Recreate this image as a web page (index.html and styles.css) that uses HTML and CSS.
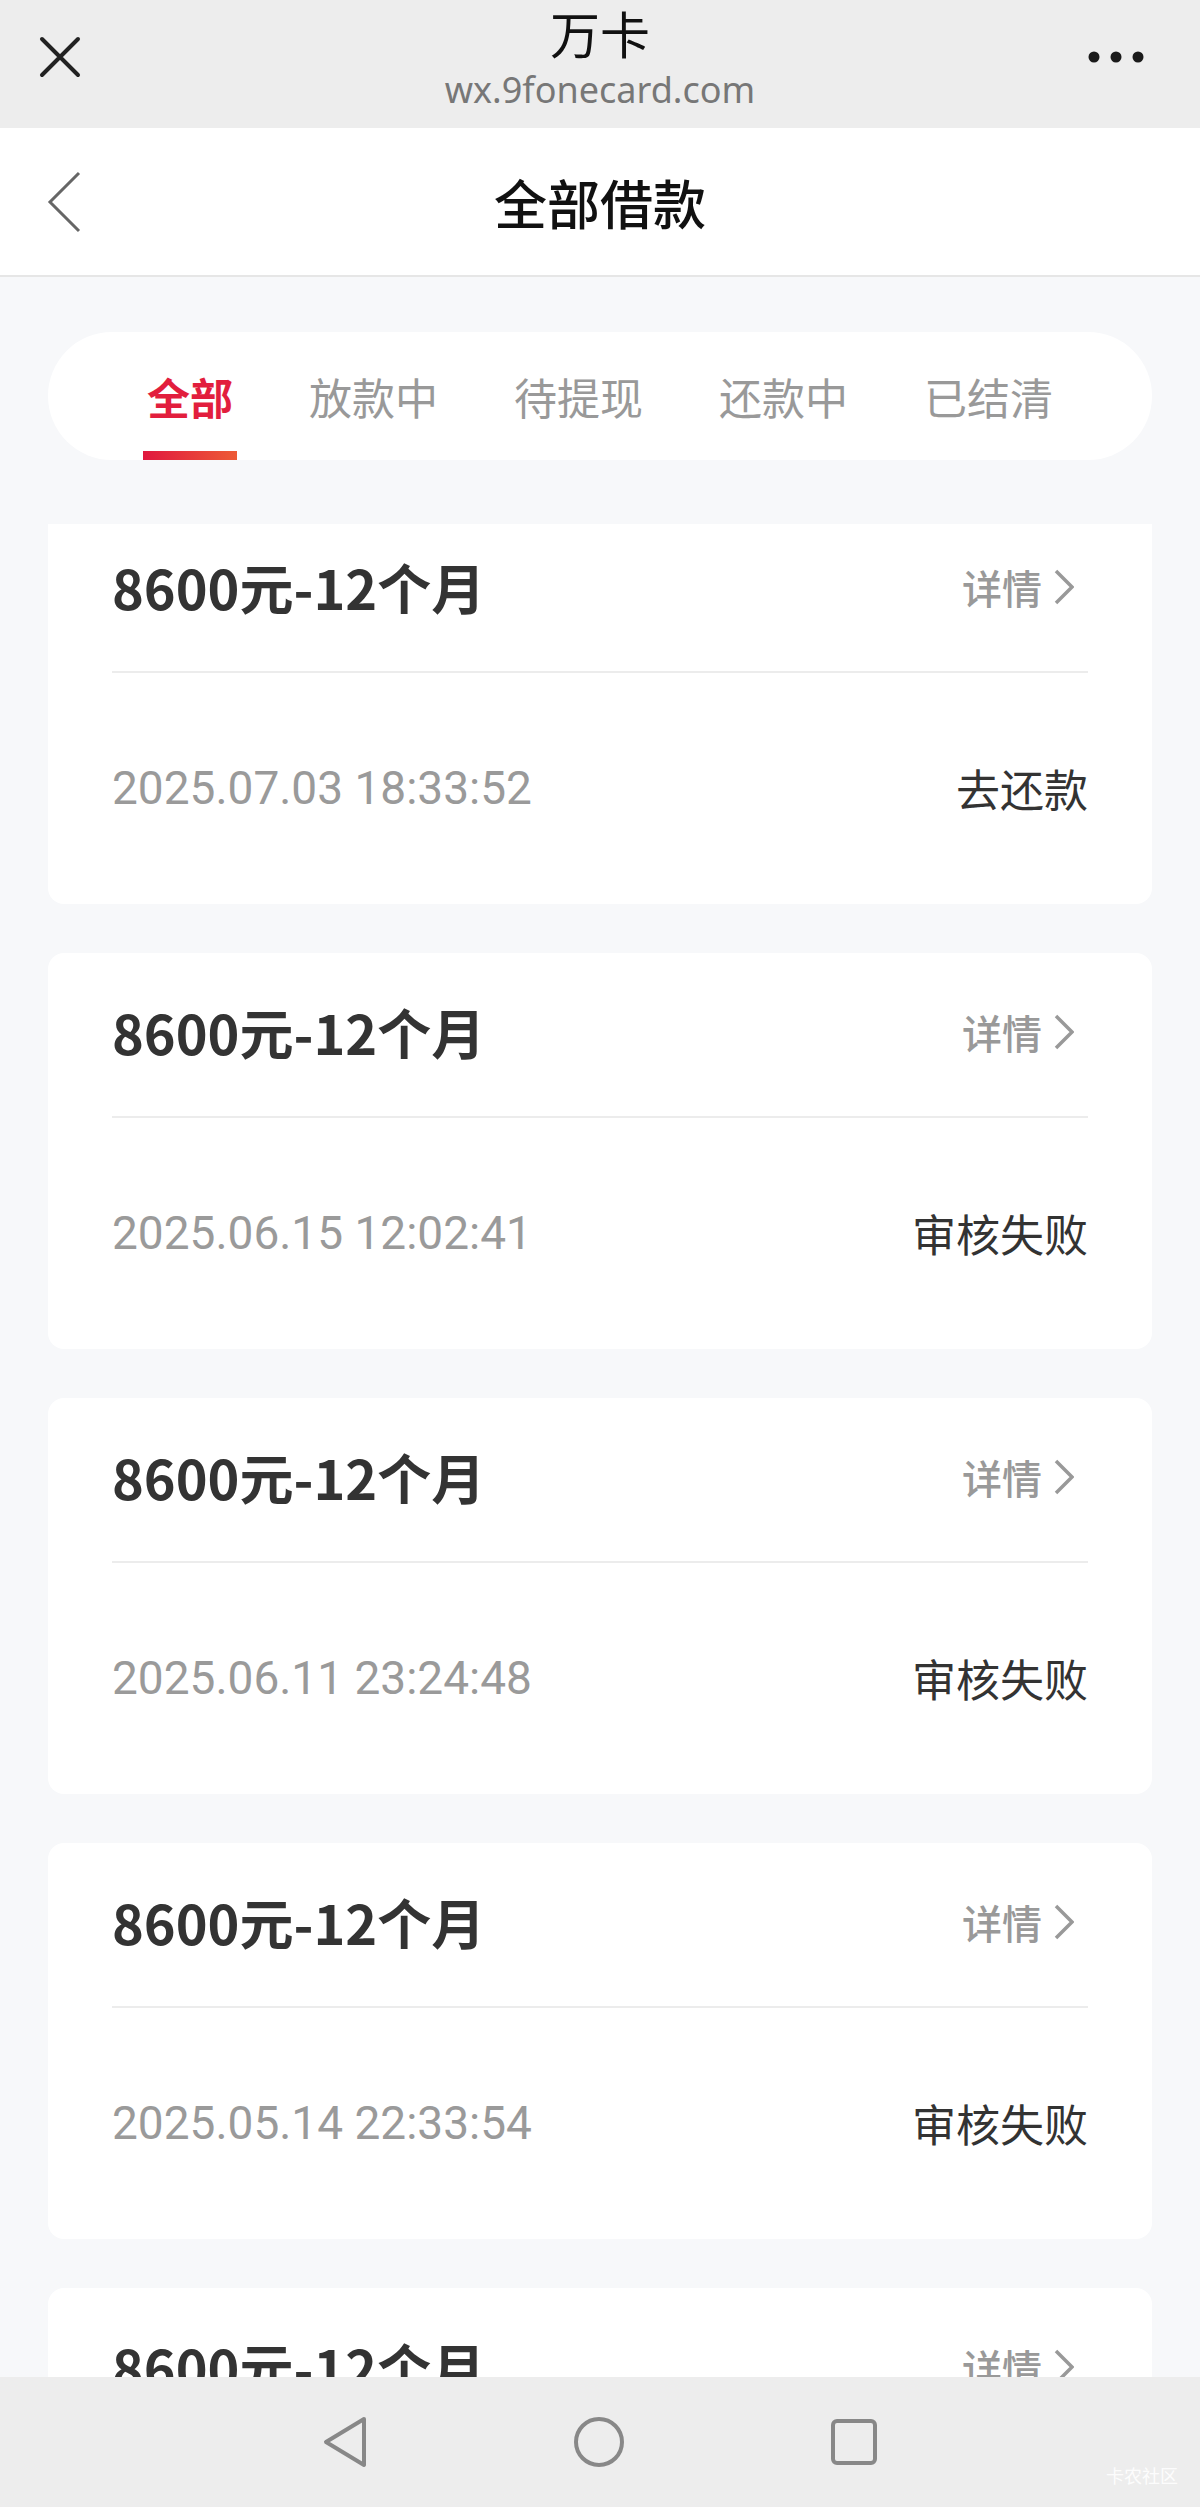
FILE: index.html
```html
<!DOCTYPE html>
<html lang="zh-CN">
<head>
  <meta charset="UTF-8">
  <meta name="viewport" content="width=device-width, initial-scale=1.0">
  <title>全部借款</title>
  <link rel="stylesheet" href="styles.css">
</head>
<body>
  <!-- Barra del browser -->
  <div class="topbar">
    <div class="topbar-left">
      <svg class="icon-close" width="42" height="42" viewBox="0 0 42 42">
        <path d="M3 3 L39 39 M39 3 L3 39" stroke="#222" stroke-width="4" stroke-linecap="round" fill="none"/>
      </svg>
    </div>
    <div class="topbar-title">
      <div class="site-name">万卡</div>
      <div class="site-url">wx.9fonecard.com</div>
    </div>
    <div class="topbar-right">
      <svg class="icon-more" width="56" height="12" viewBox="0 0 56 12">
        <circle cx="6" cy="6" r="5.5" fill="#1a1a1a"/>
        <circle cx="28" cy="6" r="5.5" fill="#1a1a1a"/>
        <circle cx="50" cy="6" r="5.5" fill="#1a1a1a"/>
      </svg>
    </div>
  </div>

  <!-- Intestazione pagina -->
  <div class="header">
    <div class="header-left">
      <svg class="icon-back" width="34" height="62" viewBox="0 0 34 62">
        <path d="M32 2 L3 31 L32 60" stroke="#666" stroke-width="3" fill="none"/>
      </svg>
    </div>
    <h1 class="page-title">全部借款</h1>
    <div class="header-right"></div>
  </div>

  <div class="main">
    <div class="tabs">
      <span class="tab active">全部</span>
      <span class="tab">放款中</span>
      <span class="tab">待提现</span>
      <span class="tab">还款中</span>
      <span class="tab">已结清</span>
    </div>

    <div class="list">
      <div class="card">
        <div class="card-head">
          <span class="loan-title">8600元-12个月</span>
          <span class="detail">详情
            <svg width="20" height="36" viewBox="0 0 20 36"><path d="M2 2 L18 18 L2 34" stroke="#999" stroke-width="3.5" fill="none"/></svg>
          </span>
        </div>
        <div class="card-body">
          <span class="loan-date">2025.07.03 18:33:52</span>
          <span class="loan-status">去还款</span>
        </div>
      </div>

      <div class="card">
        <div class="card-head">
          <span class="loan-title">8600元-12个月</span>
          <span class="detail">详情
            <svg width="20" height="36" viewBox="0 0 20 36"><path d="M2 2 L18 18 L2 34" stroke="#999" stroke-width="3.5" fill="none"/></svg>
          </span>
        </div>
        <div class="card-body">
          <span class="loan-date">2025.06.15 12:02:41</span>
          <span class="loan-status">审核失败</span>
        </div>
      </div>

      <div class="card">
        <div class="card-head">
          <span class="loan-title">8600元-12个月</span>
          <span class="detail">详情
            <svg width="20" height="36" viewBox="0 0 20 36"><path d="M2 2 L18 18 L2 34" stroke="#999" stroke-width="3.5" fill="none"/></svg>
          </span>
        </div>
        <div class="card-body">
          <span class="loan-date">2025.06.11 23:24:48</span>
          <span class="loan-status">审核失败</span>
        </div>
      </div>

      <div class="card">
        <div class="card-head">
          <span class="loan-title">8600元-12个月</span>
          <span class="detail">详情
            <svg width="20" height="36" viewBox="0 0 20 36"><path d="M2 2 L18 18 L2 34" stroke="#999" stroke-width="3.5" fill="none"/></svg>
          </span>
        </div>
        <div class="card-body">
          <span class="loan-date">2025.05.14 22:33:54</span>
          <span class="loan-status">审核失败</span>
        </div>
      </div>

      <div class="card">
        <div class="card-head">
          <span class="loan-title">8600元-12个月</span>
          <span class="detail">详情
            <svg width="20" height="36" viewBox="0 0 20 36"><path d="M2 2 L18 18 L2 34" stroke="#999" stroke-width="3.5" fill="none"/></svg>
          </span>
        </div>
        <div class="card-body">
          <span class="loan-date">2025.04.20 10:12:36</span>
          <span class="loan-status">审核失败</span>
        </div>
      </div>
    </div>
  </div>

  <!-- Barra di navigazione di sistema -->
  <div class="navbar">
    <svg width="44" height="52" viewBox="0 0 44 52">
      <path d="M41 3 L3 26 L41 49 Z" stroke="#888" stroke-width="4" stroke-linejoin="round" fill="none"/>
    </svg>
    <svg width="50" height="50" viewBox="0 0 50 50">
      <circle cx="25" cy="25" r="23" stroke="#888" stroke-width="4" fill="none"/>
    </svg>
    <svg width="46" height="46" viewBox="0 0 46 46">
      <rect x="2" y="2" width="42" height="42" rx="4" stroke="#888" stroke-width="4" fill="none"/>
    </svg>
    <span class="watermark">卡农社区</span>
  </div>
</body>
</html>
```

FILE: styles.css
```css
body {
  margin: 0;
  height: 2507px;
  display: flex;
  flex-direction: column;
  overflow: hidden;
  font-family: "Noto Sans CJK SC", "Noto Sans", sans-serif;
  background-color: #f7f8fa;
  color: #333;
}
.topbar {
  height: 128px;
  flex-shrink: 0;
  display: grid;
  grid-template-columns: 1fr auto 1fr;
  align-items: start;
  background-color: #ededed;
}
.topbar-left {
  padding: 36px 0 0 39px;
  display: flex;
}
.topbar-right {
  padding: 51px 56px 0 0;
  display: flex;
  justify-content: flex-end;
}
.topbar-title {
  text-align: center;
  padding-top: 6px;
}
.site-name {
  font-size: 50px;
  line-height: 52px;
  color: #111;
}
.site-url {
  font-family: "Noto Sans", sans-serif;
  font-size: 36px;
  line-height: 40px;
  margin-top: 12px;
  color: #777;
}
.header {
  height: 147px;
  flex-shrink: 0;
  display: grid;
  grid-template-columns: 1fr auto 1fr;
  align-items: center;
  background-color: white;
  border-bottom: 2px solid #e6e6e6;
}
.header-left {
  padding-left: 47px;
  display: flex;
}
.page-title {
  margin: 0;
  font-size: 53px;
  font-weight: 500;
  color: #111;
  line-height: 60px;
}
.main {
  flex: 1;
  min-height: 0;
  display: flex;
  flex-direction: column;
  padding: 55px 48px 0;
}
.tabs {
  height: 128px;
  flex-shrink: 0;
  display: flex;
  justify-content: center;
  gap: 76px;
  background-color: white;
  border-radius: 64px;
}
.tab {
  position: relative;
  display: flex;
  align-items: center;
  font-size: 43px;
  color: #999;
}
.tab.active {
  color: #e21e3d;
  font-weight: bold;
}
.tab.active::after {
  content: "";
  position: absolute;
  left: -4px;
  right: -4px;
  bottom: 0;
  height: 9px;
  background: linear-gradient(90deg, #e0183f, #ed5a35);
}
.list {
  flex: 1;
  min-height: 0;
  overflow: hidden;
  margin-top: 64px;
}
.card {
  height: 396px;
  box-sizing: border-box;
  padding: 0 64px;
  margin-bottom: 49px;
  background-color: white;
  border-radius: 16px;
}
.card:first-child {
  margin-top: -16px;
}
.card-head {
  height: 165px;
  box-sizing: border-box;
  padding-bottom: 6px;
  display: flex;
  align-items: center;
  justify-content: space-between;
  border-bottom: 2px solid #ececec;
}
.loan-title {
  font-size: 54px;
  font-weight: bold;
  color: #333;
}
.detail {
  display: flex;
  align-items: center;
  gap: 12px;
  font-size: 40px;
  font-weight: 500;
  color: #999;
  margin-right: 14px;
}
.card-body {
  height: 229px;
  display: flex;
  align-items: center;
  justify-content: space-between;
}
.loan-date {
  font-family: Roboto, "Noto Sans CJK SC", sans-serif;
  font-size: 46px;
  color: #9a9a9a;
}
.loan-status {
  font-size: 44px;
  color: #333;
}
.navbar {
  position: relative;
  height: 130px;
  flex-shrink: 0;
  display: flex;
  align-items: center;
  justify-content: center;
  gap: 207px;
  background-color: #ededed;
}
.watermark {
  position: absolute;
  right: 22px;
  bottom: 22px;
  font-size: 18px;
  line-height: 20px;
  color: rgba(255, 255, 255, 0.9);
}
```
